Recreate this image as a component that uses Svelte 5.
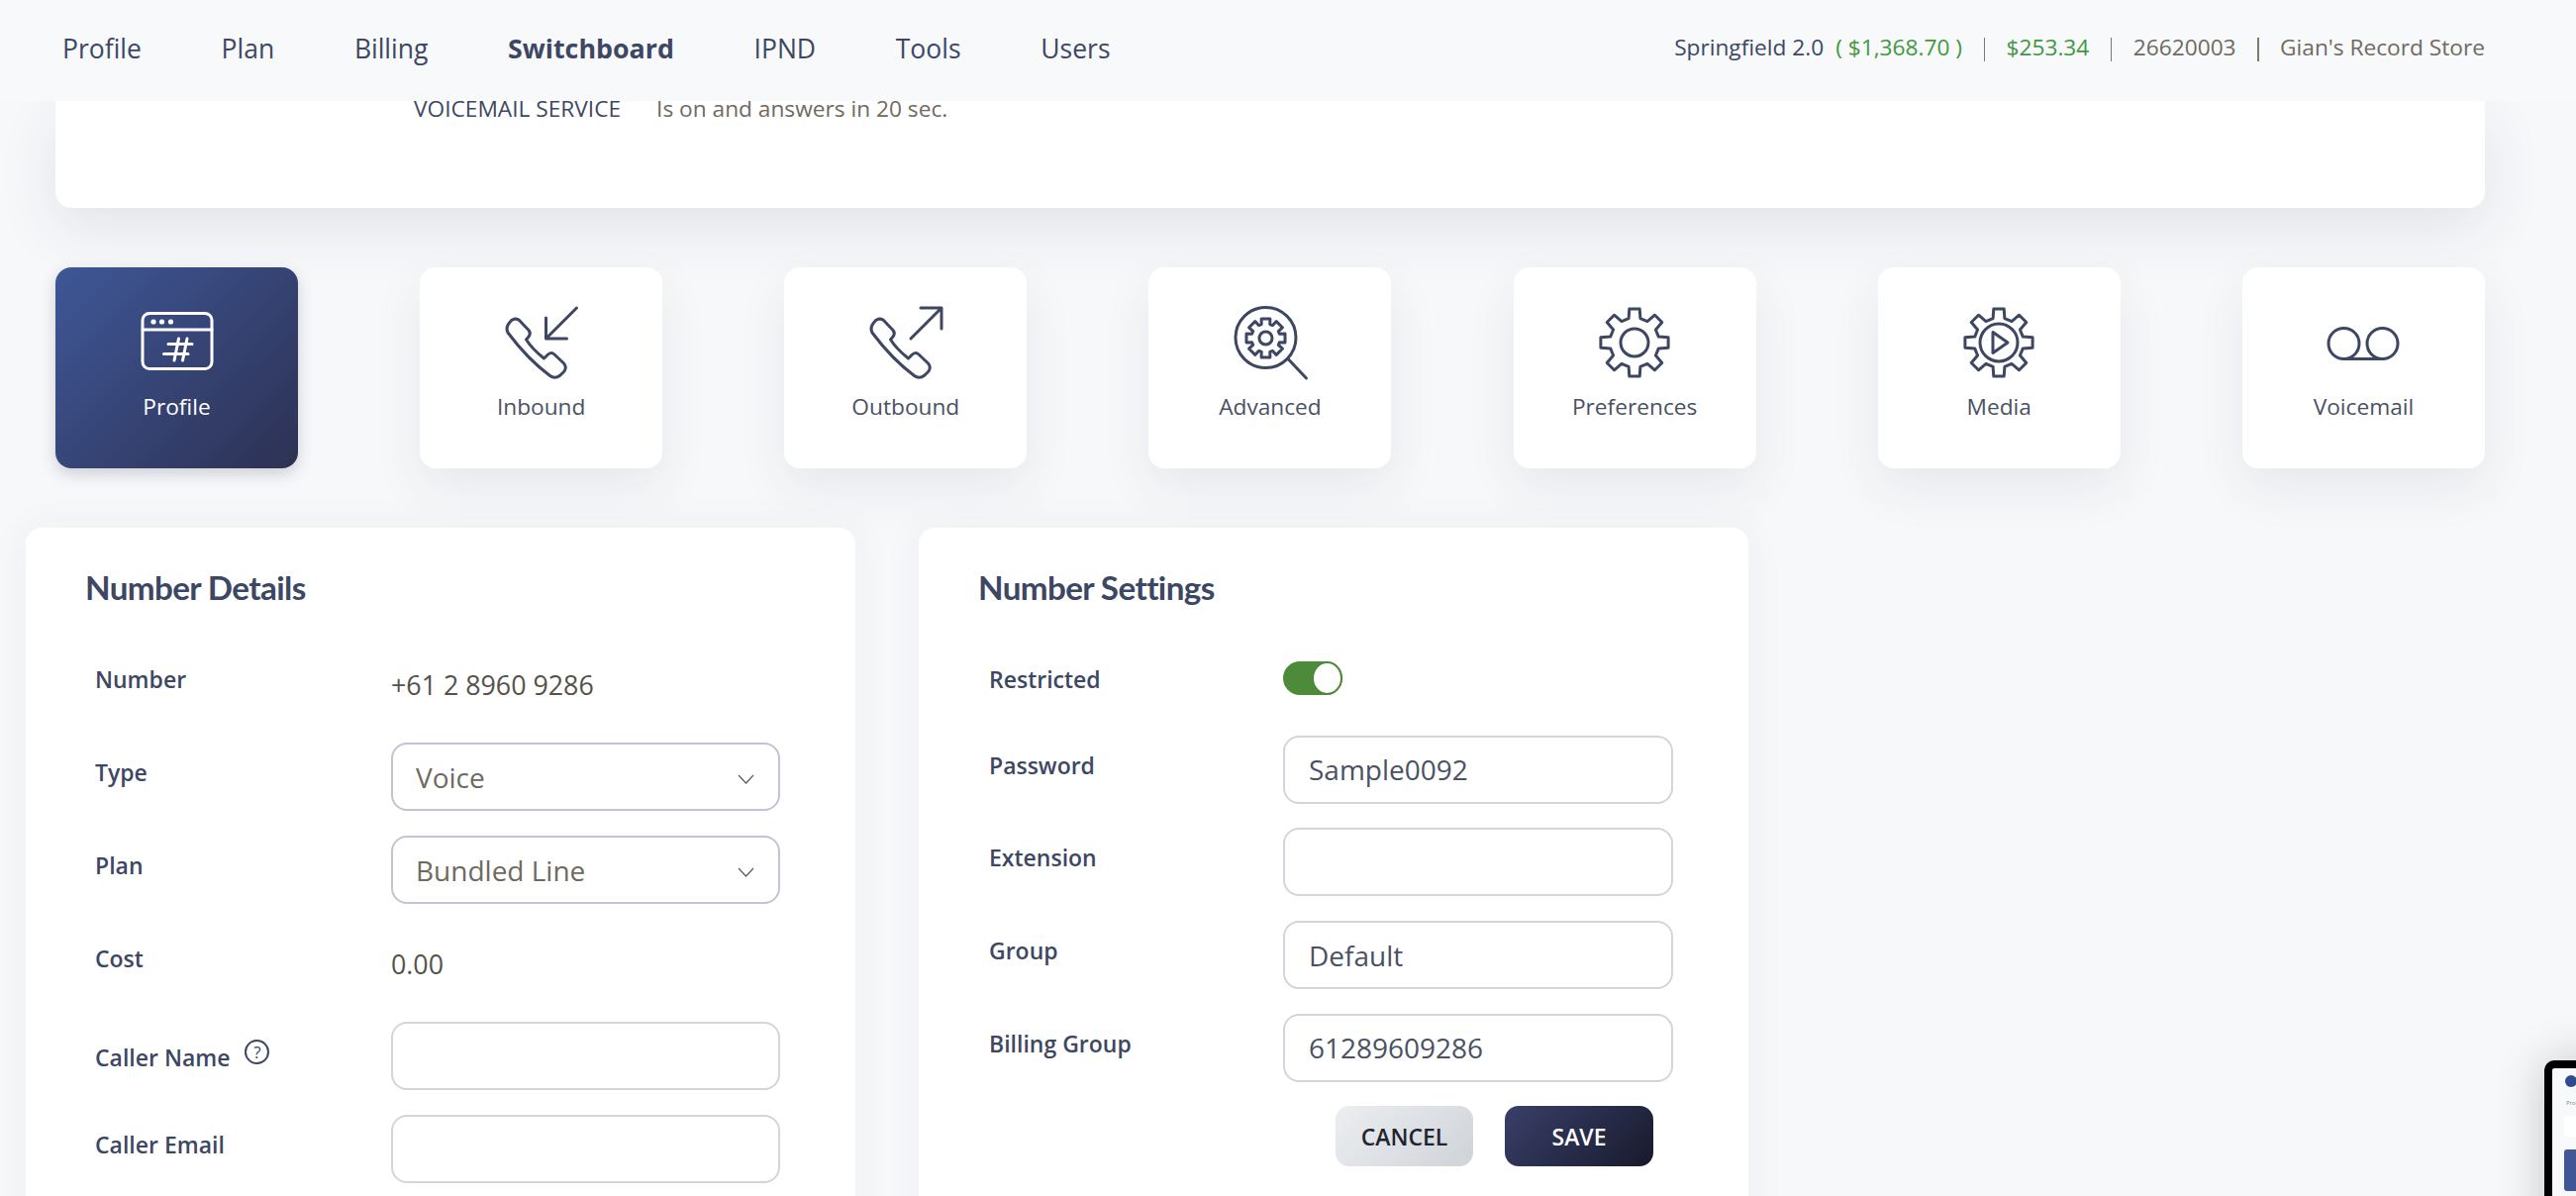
<script>
  const nav = ["Profile", "Plan", "Billing", "Switchboard", "IPND", "Tools", "Users"];

  // 8 tooth cog outline, flat teeth, straight valleys
  function cog(cx, cy, rOut, rBase, hwOut, hwBase, teeth = 8) {
    let d = "";
    for (let i = 0; i < teeth; i++) {
      const a = ((i * 360) / teeth - 90) * (Math.PI / 180);
      const pts = [
        [rBase, a - hwBase],
        [rOut, a - hwOut],
        [rOut, a + hwOut],
        [rBase, a + hwBase]
      ];
      for (const [r, t] of pts) {
        d += `${d ? "L" : "M"}${(cx + r * Math.cos(t)).toFixed(1)} ${(cy + r * Math.sin(t)).toFixed(1)} `;
      }
    }
    return d + "Z";
  }

  const bigCog = cog(40, 40, 34.5, 25, 0.15, 0.24);
  const smallCog = cog(35.5, 35.5, 20, 14.5, 0.22, 0.3);
  const handset =
    "M7.5 20C10 16 14.5 15 17.5 17.5L27 27.5C29 30 28.5 32 27 34L24.5 37C29 44 35 50 42.5 56L46 52.5C48.5 50 51 50 53 52L62.5 61C65 64 65 66 63 69L59 73C55 76 52 76 48.5 73.5C33 62 18 46 6 30C4 26 5 23 7.5 20Z";

  const tiles = ["Profile", "Inbound", "Outbound", "Advanced", "Preferences", "Media", "Voicemail"];
</script>

<div class="page">
  <header class="topbar">
    <nav class="menu">
      {#each nav as item}
        <span class:current={item === "Switchboard"}>{item}</span>
      {/each}
    </nav>
    <div class="account">
      <span class="site">Springfield 2.0</span>
      <span class="money first">( $1,368.70 )</span>
      <span class="sep"></span>
      <span class="money">$253.34</span>
      <span class="sep"></span>
      <span>26620003</span>
      <span class="sep"></span>
      <span>Gian's Record Store</span>
    </div>
  </header>

  <main class="content">
    <section class="summary">
      <div class="summary-row">
        <span class="summary-key">VOICEMAIL SERVICE</span>
        <span class="summary-val">Is on and answers in 20 sec.</span>
      </div>
    </section>

    <section class="tiles">
      {#each tiles as name, i}
        <div class="tile" class:active={i === 0}>
          <svg viewBox="0 0 80 80" width="80" height="80" fill="none" stroke="currentColor" stroke-width="3" stroke-linecap="round" stroke-linejoin="round">
            {#if name === "Profile"}
              <rect x="5" y="10.5" width="70" height="56" rx="7" />
              <path d="M5 27H75" />
              <circle cx="16" cy="19" r="2.6" fill="currentColor" stroke="none" />
              <circle cx="24.5" cy="19" r="2.6" fill="currentColor" stroke="none" />
              <circle cx="33.5" cy="19" r="2.6" fill="currentColor" stroke="none" />
              <path d="M31 41.5H55M26.5 51.5H51M37 58L41.5 36M45.5 58L50 36" />
            {:else if name === "Inbound"}
              <path d={handset} />
              <path d="M75.5 5L44.5 36M44.5 15V36H65.5" />
            {:else if name === "Outbound"}
              <path d={handset} />
              <path d="M45 36L76 5M55 5H76V26" />
            {:else if name === "Advanced"}
              <circle cx="35.5" cy="35" r="30.5" />
              <path d={smallCog} />
              <circle cx="35.5" cy="35.5" r="6.5" />
              <path d="M58.5 57L76.5 76" />
            {:else if name === "Preferences"}
              <path d={bigCog} />
              <circle cx="40" cy="40" r="14" />
            {:else if name === "Media"}
              <path d={bigCog} />
              <circle cx="40" cy="40" r="19" />
              <path d="M34 29.5L49 40L34 50.5Z" />
            {:else}
              <circle cx="20.5" cy="41" r="15.5" />
              <circle cx="59.5" cy="41" r="15.5" />
              <path d="M20.5 56.5H59.5" />
            {/if}
          </svg>
          <span>{name}</span>
        </div>
      {/each}
    </section>

    <section class="panels">
      <div class="panel">
        <h2>Number Details</h2>
        <div class="form">
          <div class="row">
            <span class="label">Number</span>
            <span class="value">+61 2 8960 9286</span>
          </div>
          <div class="row">
            <span class="label">Type</span>
            <div class="select-wrap">
              <select><option>Voice</option></select>
              <svg class="chev" viewBox="0 0 17 10" width="17" height="10" fill="none" stroke="#5c5c5c" stroke-width="1.2"><path d="M1 1L8.5 9L16 1" /></svg>
            </div>
          </div>
          <div class="row">
            <span class="label">Plan</span>
            <div class="select-wrap">
              <select><option>Bundled Line</option></select>
              <svg class="chev" viewBox="0 0 17 10" width="17" height="10" fill="none" stroke="#5c5c5c" stroke-width="1.2"><path d="M1 1L8.5 9L16 1" /></svg>
            </div>
          </div>
          <div class="row">
            <span class="label">Cost</span>
            <span class="value">0.00</span>
          </div>
          <div class="row">
            <span class="label with-help">Caller Name <i class="help">?</i></span>
            <input type="text" value="" />
          </div>
          <div class="row">
            <span class="label">Caller Email</span>
            <input type="text" value="" />
          </div>
        </div>
      </div>

      <div class="panel">
        <h2>Number Settings</h2>
        <div class="form settings">
          <div class="row toggle-row">
            <span class="label">Restricted</span>
            <span class="toggle"><span class="knob"></span></span>
          </div>
          <div class="row">
            <span class="label">Password</span>
            <input type="text" value="Sample0092" />
          </div>
          <div class="row">
            <span class="label">Extension</span>
            <input type="text" value="" />
          </div>
          <div class="row">
            <span class="label">Group</span>
            <input type="text" value="Default" />
          </div>
          <div class="row">
            <span class="label">Billing Group</span>
            <input type="text" value="61289609286" />
          </div>
          <div class="actions">
            <button class="btn cancel">CANCEL</button>
            <button class="btn save">SAVE</button>
          </div>
        </div>
      </div>
    </section>
  </main>

  <!-- little preview window peeking in at the corner -->
  <aside class="preview">
    <div class="preview-screen">
      <span class="preview-logo"></span>
      <span class="preview-nav">Profile</span>
      <span class="preview-card"></span>
      <span class="preview-tile"></span>
    </div>
  </aside>
</div>

<style>
  :global(body) {
    margin: 0;
    background: #f7f8fa;
  }
  .page {
    position: relative;
    height: 1208px;
    overflow: hidden;
    font-family: "Open Sans", sans-serif;
    color: #3d4763;
    background: #f7f8fa;
  }
  .topbar {
    position: relative;
    z-index: 2;
    height: 102px;
    display: flex;
    justify-content: space-between;
    align-items: center;
    padding: 0 92px 0 63px;
    box-sizing: border-box;
    background: #f8f9fb;
  }
  .menu {
    display: flex;
    gap: 80.7px;
    font-size: 26.5px;
    line-height: 36px;
    margin-top: -4px;
  }
  .menu .current {
    font-weight: 700;
    font-size: 26.8px;
  }
  .account {
    display: flex;
    align-items: center;
    font-size: 22.7px;
    line-height: 32px;
    color: #6e6a60;
    margin-top: -6px;
  }
  .site {
    color: #3d4763;
  }
  .money {
    color: #43973f;
  }
  .money.first {
    margin-left: 12px;
  }
  .sep {
    width: 1.5px;
    height: 24px;
    margin: 4px 21.5px 0;
    background: #7d796f;
  }

  .content {
    padding: 0 92px 0 56px;
  }
  .summary {
    height: 108px;
    box-sizing: border-box;
    background: #fff;
    border-radius: 0 0 16px 16px;
    box-shadow: 0 20px 60px rgba(40, 50, 70, 0.1);
    overflow: hidden;
  }
  .summary-row {
    display: flex;
    gap: 36px;
    padding-left: 362px;
    margin-top: -8px;
    font-size: 22.7px;
    line-height: 32px;
  }
  .summary-val {
    color: #6e6a60;
  }

  .tiles {
    display: flex;
    justify-content: space-between;
    margin-top: 60px;
  }
  .tile {
    width: 245px;
    height: 203px;
    box-sizing: border-box;
    padding-top: 36px;
    display: flex;
    flex-direction: column;
    align-items: center;
    background: #fff;
    border-radius: 16px;
    color: #3d4763;
    font-size: 22.7px;
    line-height: 32px;
    box-shadow: 0 20px 50px rgba(40, 50, 70, 0.08);
  }
  .tile span {
    margin-top: 9px;
    color: #4a5163;
  }
  .tile.active {
    color: #fff;
    background: linear-gradient(135deg, #3f5797, #2d3153);
    box-shadow: 0 6px 16px rgba(40, 50, 70, 0.2);
  }
  .tile.active span {
    color: #fff;
  }

  .panels {
    display: flex;
    gap: 64px;
    margin: 60px 0 0 -30px;
  }
  .panel {
    width: 838px;
    height: 760px;
    flex: none;
    box-sizing: border-box;
    padding: 40px 0 0 60px;
    background: #fff;
    border-radius: 16px;
    box-shadow: 0 0 40px rgba(40, 50, 70, 0.05);
  }
  h2 {
    margin: 0 0 43px;
    font-family: Lato, sans-serif;
    font-size: 33.2px;
    font-weight: 700;
    line-height: 40px;
    letter-spacing: -0.6px;
    color: #3d4763;
  }
  .form {
    display: flex;
    flex-direction: column;
    gap: 25px;
    padding-left: 10px;
  }
  .settings {
    margin-top: -1px;
    padding-left: 11px;
    gap: 24.7px;
  }
  .row {
    display: grid;
    grid-template-columns: 299px 393px;
    min-height: 69px;
  }
  .settings .row {
    grid-template-columns: 297px 394px;
  }
  .toggle-row {
    min-height: 63px;
  }
  .label {
    padding-top: 15px;
    font-size: 23px;
    font-weight: 600;
    line-height: 30px;
    color: #3d4763;
  }
  .toggle-row .label {
    padding-top: 16px;
  }
  .with-help {
    padding-top: 21px;
    display: flex;
    gap: 15px;
  }
  .help {
    width: 25px;
    height: 25px;
    margin-top: -3px;
    box-sizing: border-box;
    border: 2px solid #3d4763;
    border-radius: 50%;
    font-size: 17px;
    font-style: normal;
    font-weight: 400;
    line-height: 21px;
    text-align: center;
  }
  .value {
    padding-top: 18px;
    font-size: 26.8px;
    line-height: 36px;
    color: #55524a;
  }
  input,
  select {
    width: 100%;
    height: 69px;
    box-sizing: border-box;
    padding: 0 23px;
    border: 2px solid #d2d5da;
    border-radius: 16px;
    background: #fff;
    font-family: inherit;
    font-size: 28px;
    color: #4a5163;
    outline: none;
  }
  .settings input {
    padding: 0 24px;
  }
  select {
    appearance: none;
    border-color: #c4c2d8;
    color: #6e6a60;
  }
  .select-wrap {
    position: relative;
  }
  .chev {
    position: absolute;
    right: 26px;
    top: 32px;
  }
  .toggle {
    display: flex;
    justify-content: flex-end;
    width: 60px;
    height: 34px;
    margin-top: 13px;
    border-radius: 17px;
    background: #4d8b3a;
  }
  .knob {
    width: 31px;
    height: 34px;
    box-sizing: border-box;
    border: 2px solid #4d8b3a;
    border-radius: 50%;
    background: #fff;
  }
  .actions {
    display: flex;
    gap: 32px;
    margin-left: 350px;
  }
  .btn {
    height: 61px;
    border: 0;
    border-radius: 14px;
    font-family: inherit;
    font-size: 23px;
    font-weight: 600;
  }
  .cancel {
    width: 139px;
    color: #1f2430;
    background: linear-gradient(135deg, #eceef1, #cfd3d8);
  }
  .save {
    width: 150px;
    color: #fff;
    background: linear-gradient(135deg, #3a3f6a, #171a2c);
  }

  .preview {
    position: absolute;
    left: 2570px;
    top: 1071px;
    width: 80px;
    height: 180px;
    box-sizing: border-box;
    border: 8px solid #000;
    border-radius: 10px;
    background: #f8f9fb;
    box-shadow: 0 0 50px rgba(0, 0, 0, 0.2);
  }
  .preview-screen {
    position: relative;
    height: 100%;
    overflow: hidden;
  }
  .preview-logo {
    position: absolute;
    left: 13px;
    top: 7px;
    width: 12px;
    height: 12px;
    border-radius: 50%;
    background: #2f4a8f;
  }
  .preview-nav {
    position: absolute;
    left: 14px;
    top: 30px;
    font-size: 6px;
    line-height: 10px;
    color: #7f8597;
  }
  .preview-card {
    position: absolute;
    left: 12px;
    top: 48px;
    width: 60px;
    height: 21px;
    background: #fff;
    border-radius: 0 0 3px 3px;
  }
  .preview-tile {
    position: absolute;
    left: 12px;
    top: 82px;
    width: 40px;
    height: 42px;
    background: #3f5797;
    border-radius: 3px;
  }
</style>
